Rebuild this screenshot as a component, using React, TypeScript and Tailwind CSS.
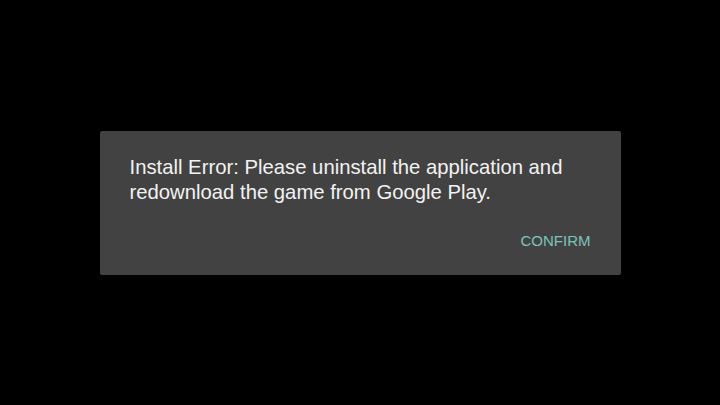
export default function App() {
  return (
    <div className="flex h-screen w-full items-center justify-center bg-black font-['Liberation_Sans',Arial,sans-serif]">
      <div className="flex w-[521px] flex-col rounded-[2px] bg-[#424242] pl-[30px] pr-[30px] pt-[24px] pb-[26px]">
        <p className="text-[20.3px] leading-[25px] text-[#f2f2f2]">
          Install Error: Please uninstall the application and redownload the game from Google Play.
        </p>
        <div className="mt-[28px] flex justify-end">
          <button type="button" className="text-[15px] leading-[16px] text-[#7fc2bd]">
            CONFIRM
          </button>
        </div>
      </div>
    </div>
  );
}
